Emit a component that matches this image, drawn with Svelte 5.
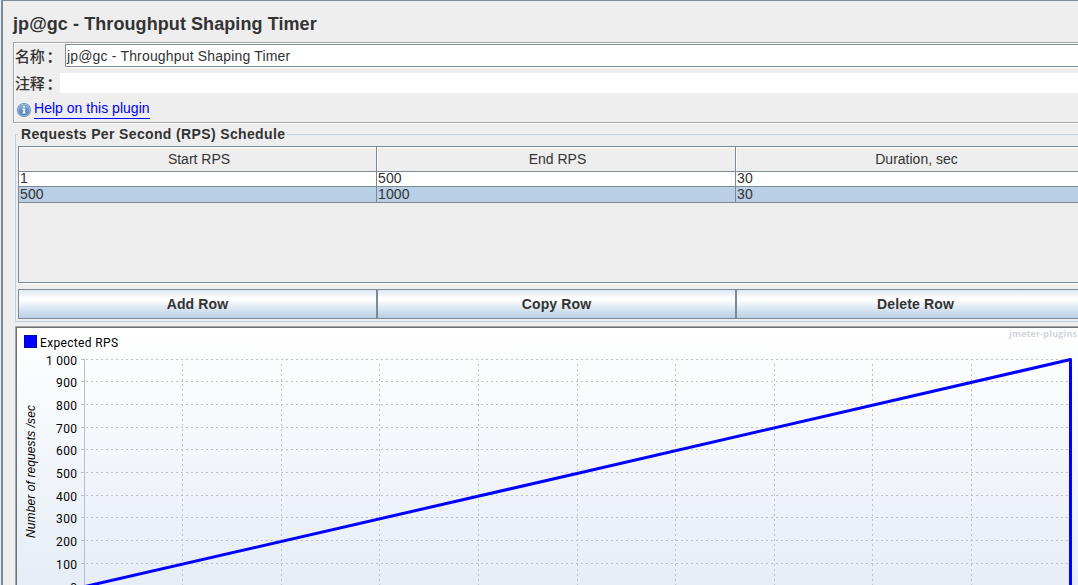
<script>
  const columns = ['Start RPS', 'End RPS', 'Duration, sec'];
  const rows = [
    ['1', '500', '30'],
    ['500', '1000', '30']
  ];
  let selected = $state(1);
  const actions = ['Add Row', 'Copy Row', 'Delete Row'];

  // Chart coordinates are relative to the inner edge of the chart frame.
  const yTicks = [
    ['1 000', 31], ['900', 53], ['800', 76], ['700', 99], ['600', 121],
    ['500', 144], ['400', 167], ['300', 189], ['200', 212], ['100', 235], ['0', 258]
  ];
  const xTicks = [165, 264, 362, 461, 560, 658, 757, 855, 954];
</script>

<div class="window">
  <h1>jp@gc - Throughput Shaping Timer</h1>

  <section class="form">
    <div class="field name">
      <label for="name">名称<b>：</b></label>
      <div id="name" class="input">jp@gc - Throughput Shaping Timer</div>
    </div>
    <div class="field comment">
      <label for="comment">注释<b>：</b></label>
      <div id="comment" class="input"></div>
    </div>
    <div class="help">
      <svg width="16" height="16" viewBox="0 0 16 16">
        <defs>
          <linearGradient id="info" x1="0" y1="0" x2="0" y2="1">
            <stop offset="0" stop-color="#8db2d8" />
            <stop offset="1" stop-color="#4a7db4" />
          </linearGradient>
        </defs>
        <circle cx="8" cy="8" r="7" fill="#6488b0" />
        <circle cx="8" cy="8" r="6.2" fill="#a9c4e0" />
        <circle cx="8" cy="8" r="5.6" fill="url(#info)" />
        <path d="M7.2 4h1.7v1.5H7.2zM6.4 6.6h2.5v4h.9v1H6.2v-1h1V7.6h-.8z" fill="#fff" />
      </svg>
      <a href="#help">Help on this plugin</a>
    </div>
  </section>

  <section class="schedule">
    <h2>Requests Per Second (RPS) Schedule</h2>
    <div class="table">
      <div class="row head">
        {#each columns as column}
          <div class="cell">{column}</div>
        {/each}
      </div>
      {#each rows as row, i}
        <div class="row" class:selected={i === selected}>
          {#each row as value}
            <div class="cell">{value}</div>
          {/each}
        </div>
      {/each}
    </div>
    <div class="actions">
      {#each actions as action}
        <button>{action}</button>
      {/each}
    </div>
  </section>

  <section class="chart">
    <svg width="1080" height="276" viewBox="0 0 1080 276">
      <rect x="7.5" y="7.5" width="12" height="12" fill="#00f" stroke="#0000b4" />
      <text x="23" y="19" textLength="78">Expected RPS</text>
      <text class="brand" x="992" y="9" textLength="86">jmeter-plugins.org</text>
      {#each yTicks as [label, y]}
        <text x="60" y={y + 6} text-anchor="end" textLength={label.length === 5 ? 31 : label.length * 7}>{label}</text>
        <line class="axis" x1="64" x2="68" y1={y + 0.5} y2={y + 0.5} />
        <line class="grid" x1="69" x2="1053" y1={y + 0.5} y2={y + 0.5} />
      {/each}
      {#each xTicks as x}
        <line class="grid" x1={x + 0.5} x2={x + 0.5} y1="258" y2="34" />
      {/each}
      <line class="axis" x1="67.5" x2="67.5" y1="31" y2="276" />
      <text class="title" transform="translate(18 210) rotate(-90)" textLength="133">Number of requests /sec</text>
      <path class="series" d="M68 258.5 L560 145.5 L1053.5 31.5 V276" />
    </svg>
  </section>
</div>

<style>
  :global(body) {
    overflow: hidden;
    background: #eee;
  }
  .window {
    box-sizing: border-box;
    height: 585px;
    margin-left: 1px;
    padding-left: 10px;
    border-top: 1px solid #7a8a99;
    border-left: 2px solid #7a8a99;
    overflow: hidden;
    display: flex;
    flex-direction: column;
    background: #eee;
    color: #333;
    font: 14px/16px "Liberation Sans", "Noto Sans CJK SC", sans-serif;
  }
  h1 {
    height: 41px;
    margin: 0;
    font-size: 18px;
    line-height: 47px;
    letter-spacing: 0.08px;
    white-space: nowrap;
  }
  .form {
    box-sizing: border-box;
    height: 81px;
    width: 1090px;
    border: 1px solid #a3a3a3;
    box-shadow: inset 1px 1px #fff, 0 1px #fff;
    display: flex;
    flex-direction: column;
    flex: none;
  }
  .field {
    display: flex;
    padding-left: 1px;
  }
  .field label {
    font: 500 15px/22px "Noto Sans CJK SC", sans-serif;
    letter-spacing: -0.3px;
    flex: none;
    white-space: nowrap;
  }
  .field label b {
    padding-left: 2px;
  }
  .input {
    box-sizing: border-box;
    flex: 1;
    background: #fff;
  }
  .name {
    height: 29px;
    padding-top: 1px;
  }
  .name label {
    width: 50px;
    line-height: 24px;
  }
  .name .input {
    height: 23px;
    padding-left: 1px;
    border: 1px solid #7a8a99;
    box-shadow: 0 1px #fff;
    line-height: 23px;
    letter-spacing: 0.17px;
  }
  .comment {
    height: 21px;
  }
  .comment label {
    width: 45px;
    line-height: 20px;
  }
  .comment .input {
    height: 20px;
  }
  .help {
    display: flex;
    padding: 6px 0 0 2px;
  }
  .help svg {
    margin-top: 2px;
    flex: none;
  }
  .help a {
    height: 18px;
    margin-left: 2px;
    border-bottom: 1px solid #00f;
    color: #00f;
    text-decoration: none;
    letter-spacing: 0.02px;
  }
  .schedule {
    box-sizing: border-box;
    flex: none;
    width: 1081px;
    height: 188px;
    margin: 11px 0 0 2px;
    border: 1px solid #b8cfe5;
    padding-left: 2px;
  }
  h2 {
    width: 266px;
    height: 16px;
    margin: -9px 0 0;
    padding-left: 3px;
    background: #eee;
    font-size: 14px;
    line-height: 17px;
    letter-spacing: 0.36px;
    white-space: nowrap;
  }
  .table {
    box-sizing: border-box;
    height: 137px;
    margin-top: 4px;
    border: 1px solid #7a8a99;
    box-shadow: 0 1px #fff;
  }
  .row {
    display: grid;
    grid-template-columns: 358px 359px 359px;
    height: 16px;
    background: #fff;
  }
  .row.selected {
    background: #b8cfe5;
  }
  .cell {
    box-sizing: border-box;
    border-right: 1px solid #7a8a99;
    border-bottom: 1px solid #7a8a99;
    padding-left: 1px;
    line-height: 15px;
    letter-spacing: 0.1px;
  }
  .row.head {
    height: 24px;
    background: #eee;
  }
  .head .cell {
    padding: 0 0 0 3px;
    line-height: 24px;
    text-align: center;
    letter-spacing: 0;
    box-shadow: inset 1px 1px #fff;
  }
  .actions {
    display: grid;
    grid-template-columns: repeat(3, 359px);
    margin-top: 6px;
  }
  button {
    height: 30px;
    padding: 0;
    border: 1px solid #7a8a99;
    border-radius: 0;
    background: linear-gradient(#dde8f3 0%, #fff 30%, #fff 35%, #dce7f2 65%, #b8cfe5 100%);
    color: #333;
    font: bold 14px/28px "Liberation Sans", sans-serif;
    letter-spacing: 0.15px;
  }
  .chart {
    flex: none;
    margin: 4px 0 0 2px;
    width: 1090px;
    height: 300px;
    border-top: 1px solid #a3a3a3;
    border-left: 1px solid #a3a3a3;
    background: linear-gradient(#fff, #e6edf6 260px, #e3ebf4);
    box-shadow: inset 1px 1px #707070;
    overflow: hidden;
  }
  .chart svg {
    display: block;
    margin: 1px 0 0 1px;
  }
  text {
    font: 12px Roboto, sans-serif;
    fill: #000;
  }
  .brand {
    font: bold 9px "Open Sans", sans-serif;
    fill: #d3d6dc;
  }
  .title {
    font: italic 12px "Liberation Sans", sans-serif;
  }
  .axis {
    stroke: #b8bfcc;
  }
  .grid {
    stroke: #bec1c9;
    stroke-dasharray: 2 3;
  }
  .series {
    fill: none;
    stroke: #00f;
    stroke-width: 3;
    stroke-linejoin: round;
  }
</style>
